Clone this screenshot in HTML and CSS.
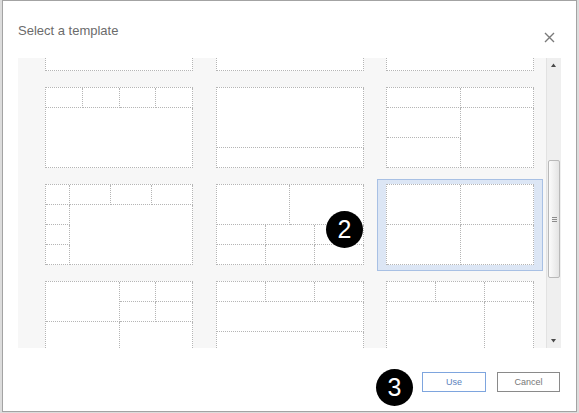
FILE: index.html
```html
<!DOCTYPE html>
<html>
<head>
<meta charset="utf-8">
<title>Select a template</title>
<link rel="stylesheet" href="styles.css">
</head>
<body>
<div class="dialog">
  <div class="header">
    <h1 class="title">Select a template</h1>
    <svg class="close" width="11" height="11" viewBox="0 0 11 11" aria-label="Close">
      <path d="M1 1 L10 10 M10 1 L1 10" stroke="#7a7a7a" stroke-width="1.4" fill="none"/>
    </svg>
  </div>

  <div class="panel">
    <div class="viewport">
      <div class="grid">
        <!-- row 0 (scrolled) -->
        <div class="cell"><div class="tile t-one"><i></i></div></div>
        <div class="cell"><div class="tile t-one"><i></i></div></div>
        <div class="cell"><div class="tile t-one"><i></i></div></div>

        <!-- row 1 -->
        <div class="cell"><div class="tile t-strip4"><i></i><i></i><i></i><i></i><i class="wide"></i></div></div>
        <div class="cell"><div class="tile t-split60"><i></i><i></i></div></div>
        <div class="cell"><div class="tile t-halves"><i></i><i></i><i></i><i class="tall"></i><i></i></div></div>

        <!-- row 2 -->
        <div class="cell"><div class="tile t-sidebar"><i></i><i></i><i></i><i></i><i></i><i class="main"></i><i></i><i></i></div></div>
        <div class="cell"><div class="tile t-twothree"><i class="s3"></i><i class="s3"></i><i class="s2"></i><i class="s2"></i><i class="s2"></i><i class="s2"></i><i class="s2"></i><i class="s2"></i></div></div>
        <div class="cell selected"><div class="tile t-quad"><i></i><i></i><i></i><i></i></div></div>

        <!-- row 3 -->
        <div class="cell"><div class="tile t-quarter"><i class="block"></i><i></i><i></i><i></i><i></i><i class="s2"></i><i class="s2"></i></div></div>
        <div class="cell"><div class="tile t-bands"><i></i><i></i><i></i><i class="wide"></i><i class="wide"></i></div></div>
        <div class="cell"><div class="tile t-cols"><i></i><i></i><i></i><i class="s2"></i><i></i></div></div>
      </div>
    </div>
    <div class="scrollbar">
      <svg class="arrow" width="15" height="14" viewBox="0 0 15 14"><path d="M5 9 L7.5 5.5 L10 9 Z" fill="#4a4a4a"/></svg>
      <div class="track"><div class="thumb"><span class="grip"></span></div></div>
      <svg class="arrow" width="15" height="14" viewBox="0 0 15 14"><path d="M5 5 L7.5 8.5 L10 5 Z" fill="#4a4a4a"/></svg>
    </div>
  </div>

  <div class="footer">
    <button class="btn btn-use">Use</button>
    <button class="btn btn-cancel">Cancel</button>
  </div>

  <span class="badge badge-2">2</span>
  <span class="badge badge-3">3</span>
</div>
</body>
</html>
```

FILE: styles.css
```css
html, body {
  margin: 0;
  padding: 0;
}

body {
  background: #dcdcdc;
  font-family: "Liberation Sans", Arial, sans-serif;
  width: 579px;
  height: 413px;
  overflow: hidden;
}

.dialog {
  position: relative;
  margin-left: 2px;
  width: 575px;
  height: 412px;
  box-sizing: border-box;
  border: 1px solid #a3a3a3;
  background: #ffffff;
  padding: 0 15px;
  display: flex;
  flex-direction: column;
}

/* header */
.header {
  height: 57px;
  display: flex;
  justify-content: space-between;
  align-items: flex-start;
  flex: none;
}

.title {
  margin: 0;
  padding-top: 22px;
  font-size: 13px;
  font-weight: normal;
  color: #6b6b6b;
  line-height: 15px;
}

.close {
  margin-top: 31px;
  margin-right: 6px;
}

/* panel */
.panel {
  height: 290px;
  flex: none;
  display: flex;
  background: #f7f7f7;
}

.viewport {
  flex: 1;
  overflow: hidden;
}

.grid {
  display: grid;
  grid-template-columns: repeat(3, 166px);
  column-gap: 4.5px;
  row-gap: 5px;
  padding-left: 18px;
  margin-top: -73px;
}

.cell {
  box-sizing: border-box;
  height: 92px;
  padding: 4px 8px 5px 8px;
  border: 1px solid transparent;
}

.cell.selected {
  background: #dce6f5;
  border-color: #a8c0e4;
}

.tile {
  display: grid;
  box-sizing: border-box;
  width: 148px;
  height: 81px;
  border-top: 1px dotted #b5b5b5;
  border-left: 1px dotted #b5b5b5;
  background: #ffffff;
}

.tile > i {
  display: block;
  border-right: 1px dotted #b5b5b5;
  border-bottom: 1px dotted #b5b5b5;
}

.tile > i.wide { grid-column: 1 / -1; }
.tile > i.s2 { grid-column: span 2; }
.tile > i.s3 { grid-column: span 3; }
.tile > i.tall { grid-row: span 2; }

.t-one { grid-template-rows: 1fr; }

.t-strip4 {
  grid-template-columns: repeat(4, 1fr);
  grid-template-rows: 20px 1fr;
}

.t-split60 { grid-template-rows: 60px 1fr; }

.t-halves {
  grid-template-columns: 1fr 1fr;
  grid-template-rows: 20px 30px 1fr;
}

.t-sidebar {
  grid-template-columns: 24px 1fr 1fr 1fr;
  grid-template-rows: repeat(4, 1fr);
}
.t-sidebar > i.main {
  grid-column: span 3;
  grid-row: span 3;
}

.t-twothree {
  grid-template-columns: repeat(6, 1fr);
  grid-template-rows: 40px 20px 1fr;
}

.t-quad {
  grid-template-columns: 1fr 1fr;
  grid-template-rows: 40px 1fr;
}

.t-quarter {
  grid-template-columns: repeat(4, 1fr);
  grid-template-rows: 20px 20px 1fr;
}
.t-quarter > i.block {
  grid-column: span 2;
  grid-row: span 2;
}

.t-bands {
  grid-template-columns: repeat(3, 1fr);
  grid-template-rows: 20px 30px 1fr;
}

.t-cols {
  grid-template-columns: repeat(3, 1fr);
  grid-template-rows: 20px 1fr;
}

/* scrollbar */
.scrollbar {
  width: 15px;
  flex: none;
  display: flex;
  flex-direction: column;
  background: #efefef;
  border-left: 1px solid #e2e2e2;
  box-sizing: border-box;
}

.arrow {
  display: block;
  flex: none;
  margin-left: -1px;
}

.track {
  flex: 1;
  padding-top: 88px;
}

.thumb {
  width: 12px;
  height: 118px;
  margin-left: 1px;
  box-sizing: border-box;
  border: 1px solid #b9b9b9;
  border-radius: 2px;
  background: linear-gradient(to right, #fbfbfb, #e4e4e4);
  display: flex;
  align-items: center;
  justify-content: center;
}

.grip {
  width: 5px;
  height: 5px;
  background: repeating-linear-gradient(to bottom, #8c8c8c 0 1px, transparent 1px 2px);
}

/* footer */
.footer {
  flex: none;
  display: flex;
  justify-content: flex-end;
  gap: 11px;
  padding-top: 24px;
  padding-right: 1px;
}

.btn {
  height: 20px;
  box-sizing: border-box;
  background: #ffffff;
  font-family: "Liberation Sans", Arial, sans-serif;
  font-size: 9px;
  padding: 0;
  line-height: 18px;
  border-radius: 0;
}

.btn-use {
  width: 64px;
  border: 1px solid #7ea5de;
  color: #5b82bd;
}

.btn-cancel {
  width: 63px;
  border: 1px solid #8a8a8a;
  color: #777777;
}

/* annotation badges */
.badge {
  position: absolute;
  width: 37px;
  height: 37px;
  border-radius: 50%;
  background: #000000;
  color: #ffffff;
  font-size: 25px;
  line-height: 37px;
  text-align: center;
}

.badge-2 {
  left: 323px;
  top: 210px;
}

.badge-3 {
  left: 373px;
  top: 368px;
}
```
